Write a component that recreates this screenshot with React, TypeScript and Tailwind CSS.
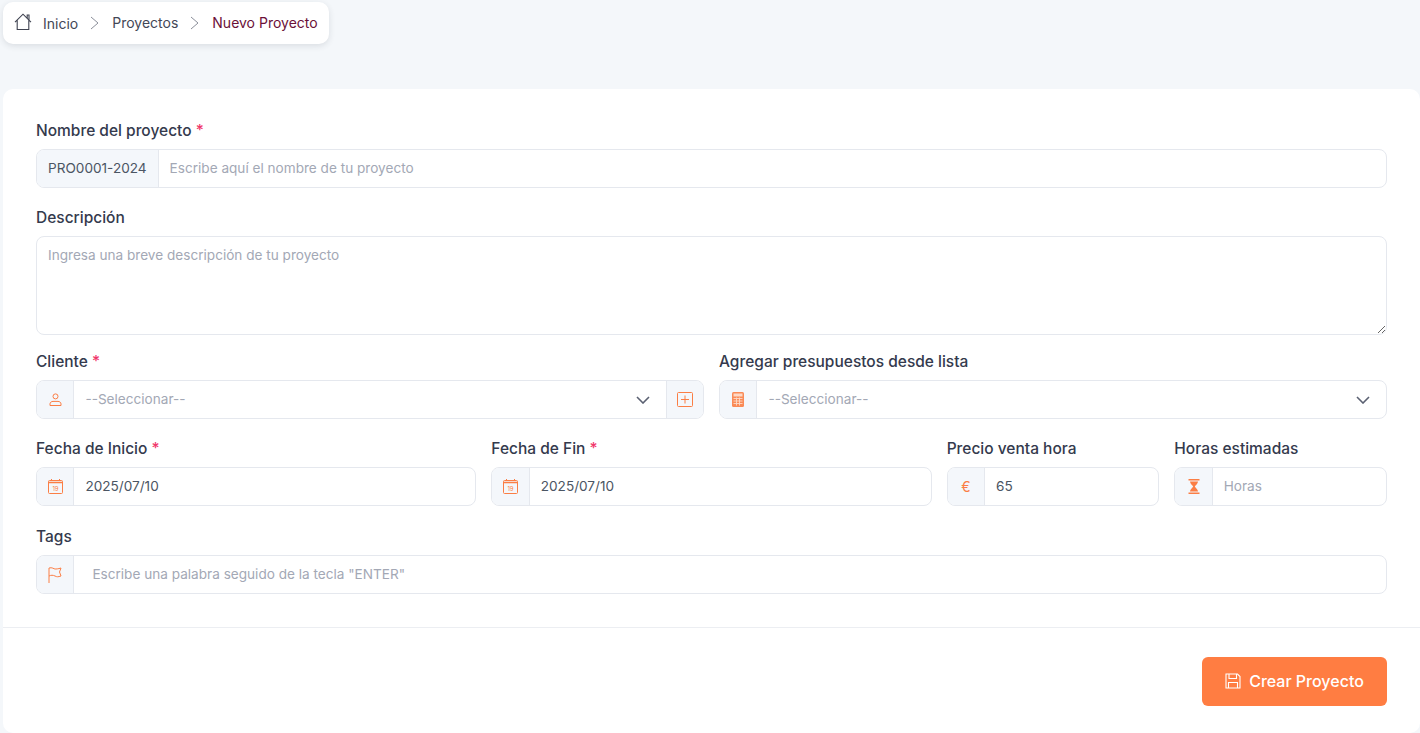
import type { ReactNode } from "react";

const addonCls = "flex w-[37.4px] shrink-0 items-center justify-center border-[#e5e8ee] bg-[#f4f7fb] text-[#fb7e45]";
const inputCls = "h-full w-full min-w-0 bg-transparent pb-[1px] text-[13.6px] text-[#4b5563] outline-none placeholder:text-[#a3a8b5]";

function Label({ text, required }: { text: string; required?: boolean }) {
  return (
    <label className="mb-[8px] block text-[15.5px] leading-[21px] font-medium text-[#343a4d]">
      {text}
      {required && <span className="text-[#f0386b]"> *</span>}
    </label>
  );
}

function Group({ icon, children }: { icon: ReactNode; children: ReactNode }) {
  return (
    <div className="flex h-[39px] overflow-hidden rounded-[8px] border border-[#e5e8ee] bg-white">
      <span className={`${addonCls} border-r`}>{icon}</span>
      {children}
    </div>
  );
}

function HouseIcon() {
  return (
    <svg width="18" height="18" viewBox="0 0 18 18" fill="none" stroke="#3f4351" strokeWidth="1.1">
      <path d="M1 9.2 9 1.2l8 8M3.2 7.2V16.5h11.6V7.2M13.2 5.4V2h1.8v5" />
    </svg>
  );
}

function Chevron() {
  return (
    <svg width="9" height="14" viewBox="0 0 9 14" fill="none" stroke="#8b8f9a" strokeWidth="1">
      <path d="M1 1l7 6-7 6" />
    </svg>
  );
}

function SelectArrow() {
  return (
    <svg width="14" height="8" viewBox="0 0 14 8" fill="none" stroke="#5b6172" strokeWidth="1.6">
      <path d="M1 1l6 6 6-6" />
    </svg>
  );
}

function UserIcon() {
  return (
    <svg width="13" height="13" viewBox="0 0 13 13" fill="none" stroke="currentColor" strokeWidth="1">
      <circle cx="6.5" cy="3.4" r="2.5" />
      <path d="M1 12.5v-1.6c0-1.5 1.4-2.5 3-2.5h5c1.6 0 3 1 3 2.5v1.6z" />
    </svg>
  );
}

function CalendarIcon() {
  return (
    <svg width="15" height="15" viewBox="0 0 15 15" fill="none" stroke="currentColor">
      <rect x="0.5" y="1.5" width="14" height="13" rx="1" />
      <path d="M0.5 3.5h14" strokeWidth="1.6" />
      <path d="M3.5 0v2M11.5 0v2" />
      <text x="7.5" y="12" textAnchor="middle" fontSize="6" stroke="none" fill="currentColor" fontFamily="Inter, sans-serif">
        19
      </text>
    </svg>
  );
}

function PlusSquare() {
  return (
    <svg width="16" height="15" viewBox="0 0 16 15" fill="none" stroke="currentColor">
      <rect x="0.5" y="0.5" width="15" height="14" rx="1" />
      <path d="M8 3.500v8M4 7.500h8" />
    </svg>
  );
}

function CalculatorIcon() {
  return (
    <svg width="12" height="15" viewBox="0 0 12 15">
      <rect width="12" height="15" rx="1.500" fill="currentColor" fillOpacity="0.9" />
      <rect x="1.500" y="1.500" width="9" height="3" fill="#fdd9c6" />
      <path d="M1.500 6.500h9M1.500 9h9M1.500 11.500h9M4.500 5.500v8M7.500 5.500v8" stroke="#fdd9c6" strokeWidth="0.9" />
    </svg>
  );
}

function HourglassIcon() {
  return (
    <svg width="12" height="15" viewBox="0 0 12 15" fill="currentColor">
      <path d="M0.500 0h11v1.500h-11zM0.500 13.500h11V15h-11z" />
      <path d="M2 2.400h8c0 2.200-2.600 3.800-3.200 5.100.6 1.300 3.200 2.900 3.200 5.100H2c0-2.200 2.600-3.800 3.200-5.100C4.600 6.200 2 4.600 2 2.400z" />
    </svg>
  );
}

function FlagIcon() {
  return (
    <svg width="14" height="16" viewBox="0 0 14 16" fill="none" stroke="currentColor">
      <path d="M1 16V1c3-1 5 1 6 1s3 0 6-1l-1.500 4 1.500 4c-3 1-4 1-6 0s-4-1-6 0" />
    </svg>
  );
}

function SaveIcon() {
  return (
    <svg width="16" height="16" viewBox="0 0 16 16" fill="none" stroke="currentColor" strokeWidth="1.1">
      <path d="M1 1h11.500L15 3.500V15H1z" />
      <path d="M4 1v4.500h7.500V1M3.500 15V9.500h9V15" />
    </svg>
  );
}

export default function App() {
  return (
    <div className="h-[733px] overflow-hidden bg-[#f4f7fa] pt-[2px] pl-[3px] font-['Inter',sans-serif]">
      {/* migas */}
      <nav className="flex h-[42px] w-[326px] items-center rounded-[10px] bg-white pl-[11px] text-[14px] text-[#434756] shadow-[0_2px_6px_rgba(30,40,60,0.12)]">
        <span className="mt-[-2px]">
          <HouseIcon />
        </span>
        <span className="ml-[11px]">Inicio</span>
        <span className="ml-[12px]">
          <Chevron />
        </span>
        <span className="mb-[2px] ml-[13px]">Proyectos</span>
        <span className="ml-[12px]">
          <Chevron />
        </span>
        <span className="mb-[2px] ml-[13px] text-[#6b1037]">Nuevo Proyecto</span>
      </nav>

      {/* formulario */}
      <form className="mt-[45px] h-[644px] rounded-[10px] bg-white">
        <div className="px-[33px] pt-[31px]">
          <Label text="Nombre del proyecto" required />
          <div className="flex h-[39px] overflow-hidden rounded-[8px] border border-[#e5e8ee]">
            <span className="flex shrink-0 items-center border-r border-[#e5e8ee] bg-[#f4f7fb] px-[11px] text-[13.6px] text-[#4b5563]">
              PRO0001-2024
            </span>
            <input className={`${inputCls} px-[11px]`} placeholder="Escribe aquí el nombre de tu proyecto" />
          </div>

          <div className="mt-[19px]">
            <Label text="Descripción" />
            <textarea
              className="block h-[99px] w-full rounded-[8px] border border-[#e5e8ee] px-[11px] py-[9px] text-[13.6px] leading-[19px] text-[#4b5563] outline-none placeholder:text-[#a3a8b5]"
              placeholder="Ingresa una breve descripción de tu proyecto"
            />
          </div>

          <div className="mt-[16px] grid grid-cols-12 gap-x-[15px]">
            <div className="col-span-6">
              <Label text="Cliente" required />
              <div className="flex h-[39px] overflow-hidden rounded-[8px] border border-[#e5e8ee]">
                <span className={`${addonCls} border-r`}>
                  <UserIcon />
                </span>
                <div className="flex flex-1 items-center justify-between pr-[16px] pl-[11px] text-[13.6px] text-[#a3a8b5]">
                  --Seleccionar--
                  <SelectArrow />
                </div>
                <span className={`${addonCls} border-l`}>
                  <PlusSquare />
                </span>
              </div>
            </div>
            <div className="col-span-6">
              <Label text="Agregar presupuestos desde lista" />
              <Group icon={<CalculatorIcon />}>
                <div className="flex flex-1 items-center justify-between pr-[16px] pl-[11px] text-[13.6px] text-[#a3a8b5]">
                  --Seleccionar--
                  <SelectArrow />
                </div>
              </Group>
            </div>
          </div>

          <div className="mt-[19px] grid grid-cols-12 gap-x-[15px]">
            <div className="col-span-4">
              <Label text="Fecha de Inicio" required />
              <Group icon={<CalendarIcon />}>
                <input className={`${inputCls} px-[11px]`} defaultValue="2025/07/10" />
              </Group>
            </div>
            <div className="col-span-4">
              <Label text="Fecha de Fin" required />
              <Group icon={<CalendarIcon />}>
                <input className={`${inputCls} px-[11px]`} defaultValue="2025/07/10" />
              </Group>
            </div>
            <div className="col-span-2">
              <Label text="Precio venta hora" />
              <Group icon={<span className="text-[14px]">€</span>}>
                <input className={`${inputCls} px-[11px]`} defaultValue="65" />
              </Group>
            </div>
            <div className="col-span-2">
              <Label text="Horas estimadas" />
              <Group icon={<HourglassIcon />}>
                <input className={`${inputCls} px-[11px]`} placeholder="Horas" />
              </Group>
            </div>
          </div>

          <div className="mt-[20px]">
            <Label text="Tags" />
            <Group icon={<FlagIcon />}>
              <input className={`${inputCls} px-[18px]`} placeholder='Escribe una palabra seguido de la tecla "ENTER"' />
            </Group>
          </div>
        </div>

        <div className="mt-[33px] flex justify-end border-t border-[#eceef2] px-[33px] pt-[29px]">
          <button
            type="button"
            className="flex h-[49px] w-[185px] items-center justify-center gap-[8px] rounded-[6px] bg-[#ff7d42] pb-[1px] text-[16px] font-medium text-white"
          >
            <SaveIcon />
            Crear Proyecto
          </button>
        </div>
      </form>
    </div>
  );
}
